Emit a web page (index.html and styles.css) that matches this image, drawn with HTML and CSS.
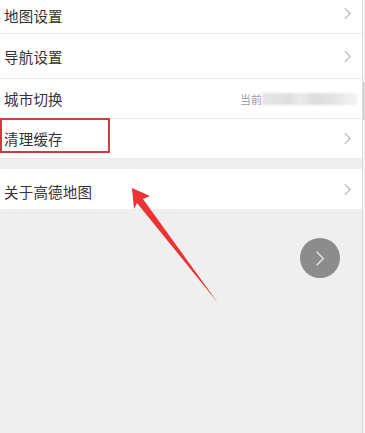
FILE: index.html
```html
<!DOCTYPE html>
<html lang="zh-CN">
<head>
    <meta charset="UTF-8">
    <meta name="viewport" content="width=device-width, initial-scale=1.0">
    <title>设置</title>
    <link rel="stylesheet" href="styles.css">
</head>
<body>
    <div class="page">
        <div class="main">
            <div class="group first">
                <div class="row">
                    <span class="label">地图设置</span>
                    <svg class="chevron" viewBox="0 0 8 14"><path d="M1 1 L7 7 L1 13" /></svg>
                </div>
                <div class="row tall">
                    <span class="label">导航设置</span>
                    <svg class="chevron" viewBox="0 0 8 14"><path d="M1 1 L7 7 L1 13" /></svg>
                </div>
                <div class="row">
                    <span class="label">城市切换</span>
                    <span class="current">当前</span>
                    <span class="blurred"></span>
                </div>
                <div class="row">
                    <span class="label">清理缓存</span>
                    <svg class="chevron" viewBox="0 0 8 14"><path d="M1 1 L7 7 L1 13" /></svg>
                    <div class="highlight"></div>
                </div>
            </div>
            <div class="group">
                <div class="row last">
                    <span class="label">关于高德地图</span>
                    <svg class="chevron" viewBox="0 0 8 14"><path d="M1 1 L7 7 L1 13" /></svg>
                </div>
            </div>

            <button class="next">
                <svg viewBox="0 0 12 20"><path d="M2 2 L10 10 L2 18" /></svg>
            </button>

            <svg class="arrow" viewBox="0 0 365 433">
                <polygon points="132,188 150,196 143,199 218,303 137,203 134,209" />
            </svg>
        </div>
        <div class="scrollbar"><div class="thumb"></div></div>
    </div>
</body>
</html>
```

FILE: styles.css
```css
body {
    margin: 0;
    background: #efefef;
    font-family: "Noto Sans CJK SC", "Noto Sans", sans-serif;
    color: #333;
}
.page {
    display: flex;
    height: 433px;
    overflow: hidden;
}
.main {
    position: relative;
    width: 362px;
}
.group {
    background: #fff;
    margin-bottom: 10px;
}
.group.first {
    margin-top: -6px;
}
.row {
    position: relative;
    display: flex;
    align-items: center;
    height: 39px;
    padding-left: 4px;
    border-bottom: 1px solid #ececec;
}
.row:first-child .label {
    padding-top: 4px;
}
.row.tall {
    height: 44px;
}
.row.last {
    height: 40px;
    border-bottom: none;
}
.label {
    flex: 1;
    font-size: 14.5px;
    letter-spacing: 0.2px;
}
.chevron {
    width: 7px;
    height: 13px;
    margin-right: 11px;
    fill: none;
    stroke: #a8a8a8;
    stroke-width: 1.2;
}
.current {
    font-size: 11px;
    color: #9a9a9a;
}
.blurred {
    width: 95px;
    height: 12px;
    margin-right: 5px;
    background: linear-gradient(to right, #e6e6e6 0%, #dedede 30%, #ebebeb 40%, #dcdcdc 55%, #e4e4e4 75%, #f4f4f4 100%);
    filter: blur(1px);
}
.highlight {
    position: absolute;
    left: 0;
    top: -1px;
    width: 106px;
    height: 31px;
    border: 2px solid #d23a40;
}
.next {
    position: absolute;
    left: 300px;
    top: 238px;
    width: 40px;
    height: 40px;
    border: none;
    border-radius: 50%;
    background: #8c8c8c;
    display: flex;
    align-items: center;
    justify-content: center;
    padding: 0;
}
.next svg {
    width: 10px;
    height: 17px;
    fill: none;
    stroke: #e8e8e8;
    stroke-width: 1.6;
}
.arrow {
    position: absolute;
    left: 0;
    top: 0;
    width: 365px;
    height: 433px;
    pointer-events: none;
}
.arrow polygon {
    fill: #ea3434;
}
.scrollbar {
    width: 2px;
    border-left: 1px solid #dadada;
    background: #f4f4f4;
}
.thumb {
    margin-top: 82px;
    height: 38px;
    background: #d4d4d4;
}
```
